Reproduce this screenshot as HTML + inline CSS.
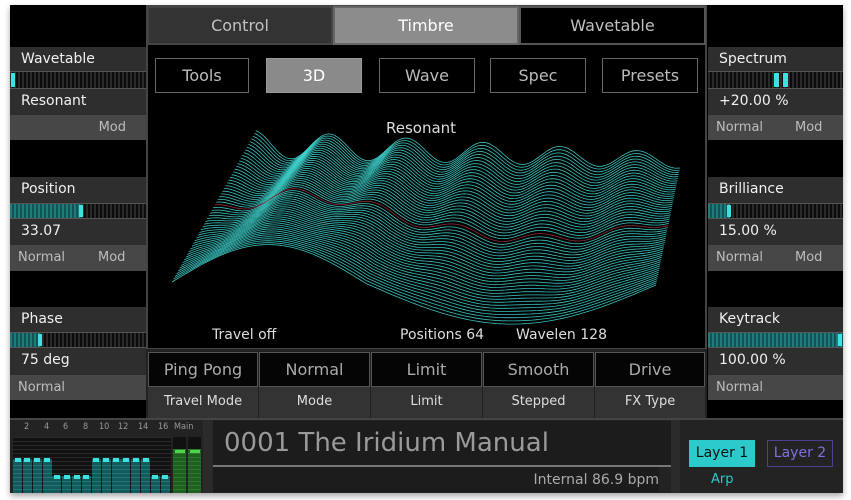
<!DOCTYPE html>
<html><head><meta charset="utf-8"><style>
*{margin:0;padding:0;box-sizing:border-box}
body{width:851px;height:500px;background:#fff;position:relative;overflow:hidden;font-family:"DejaVu Sans","Liberation Sans",sans-serif}
.a{position:absolute}
.app{left:10px;top:5px;width:833px;height:488px;background:#000;box-shadow:0 3px 6px rgba(0,0,0,.35)}
.lab{background:#2e2e2e;color:#f0f0f0;font-size:14px;padding-left:11px;line-height:25px}
.mod{background:#474747;color:#bdbdbd;font-size:13px;line-height:25px;padding-left:8px}
.bar{background:repeating-linear-gradient(90deg,#2a2a2a 0 2px,#0c0c0c 2px 4px);border-top:1px solid #555;border-bottom:1px solid #555}
.fill{background:repeating-linear-gradient(90deg,#1f7c7c 0 2px,#125454 2px 4px);height:100%;position:absolute;top:0}
.mk{position:absolute;top:1px;bottom:1px;width:4px;background:#3fe0e0}
.tab{color:#c0c0c0;font-size:16px;text-align:center;line-height:36px;border:2px solid #444}
.sub{color:#bbb;font-size:16px;text-align:center;line-height:34px;border:1px solid #666}
.btn{background:#050505;border:1px solid #555;color:#aaa;font-size:16px;text-align:center;line-height:33px}
.bl{background:#333;color:#ddd;font-size:13px;text-align:center;line-height:30px}
</style></head><body>
<div class="a app"></div>
<!-- left column -->
<div class="a lab" style="left:10px;top:47px;width:136px;height:24px">Wavetable</div>
<div class="a bar" style="left:10px;top:71px;width:136px;height:18px"><div class="mk" style="left:1px"></div></div>
<div class="a lab" style="left:10px;top:89px;width:136px;height:26px">Resonant</div>
<div class="a mod" style="left:10px;top:115px;width:136px;height:25px;text-align:right;padding-right:20px">Mod</div>
<div class="a lab" style="left:10px;top:177px;width:136px;height:26px">Position</div>
<div class="a bar" style="left:10px;top:203px;width:136px;height:16px"><div class="fill" style="left:0;width:72px"></div><div class="mk" style="left:69px"></div></div>
<div class="a lab" style="left:10px;top:219px;width:136px;height:26px">33.07</div>
<div class="a mod" style="left:10px;top:245px;width:136px;height:26px">Normal<span style="position:absolute;left:88px">Mod</span></div>
<div class="a lab" style="left:10px;top:307px;width:136px;height:25px">Phase</div>
<div class="a bar" style="left:10px;top:332px;width:136px;height:16px"><div class="fill" style="left:0;width:31px"></div><div class="mk" style="left:28px"></div></div>
<div class="a lab" style="left:10px;top:348px;width:136px;height:27px">75 deg</div>
<div class="a mod" style="left:10px;top:375px;width:136px;height:25px">Normal</div>
<!-- right column -->
<div class="a lab" style="left:708px;top:47px;width:135px;height:24px">Spectrum</div>
<div class="a bar" style="left:708px;top:71px;width:135px;height:18px"><div class="mk" style="left:66px;width:5px"></div><div class="mk" style="left:75px;width:5px"></div></div>
<div class="a lab" style="left:708px;top:89px;width:135px;height:26px">+20.00 %</div>
<div class="a mod" style="left:708px;top:115px;width:135px;height:25px">Normal<span style="position:absolute;left:87px">Mod</span></div>
<div class="a lab" style="left:708px;top:177px;width:135px;height:26px">Brilliance</div>
<div class="a bar" style="left:708px;top:203px;width:135px;height:16px"><div class="fill" style="left:0;width:22px"></div><div class="mk" style="left:19px"></div></div>
<div class="a lab" style="left:708px;top:219px;width:135px;height:26px">15.00 %</div>
<div class="a mod" style="left:708px;top:245px;width:135px;height:26px">Normal<span style="position:absolute;left:87px">Mod</span></div>
<div class="a lab" style="left:708px;top:307px;width:135px;height:25px">Keytrack</div>
<div class="a bar" style="left:708px;top:332px;width:135px;height:16px"><div class="fill" style="left:0;width:135px"></div><div class="mk" style="left:130px"></div></div>
<div class="a lab" style="left:708px;top:348px;width:135px;height:27px">100.00 %</div>
<div class="a mod" style="left:708px;top:375px;width:135px;height:25px">Normal</div>
<!-- center -->
<div class="a" style="left:146px;top:5px;width:561px;height:345px;border:2px solid #444"></div>
<div class="a tab" style="left:147px;top:6px;width:186px;height:39px;background:#333">Control</div>
<div class="a tab" style="left:333px;top:6px;width:186px;height:39px;background:#8c8c8c;color:#fff;border-color:#666">Timbre</div>
<div class="a tab" style="left:519px;top:6px;width:187px;height:39px;background:#000;border-color:#555">Wavetable</div>
<div class="a sub" style="left:155px;top:58px;width:94px;height:35px">Tools</div>
<div class="a sub" style="left:266px;top:58px;width:96px;height:35px;background:#8a8a8a;color:#fff;border-color:#999">3D</div>
<div class="a sub" style="left:379px;top:58px;width:96px;height:35px">Wave</div>
<div class="a sub" style="left:490px;top:58px;width:96px;height:35px">Spec</div>
<div class="a sub" style="left:602px;top:58px;width:96px;height:35px">Presets</div>
<svg class="a" style="left:0;top:0" width="851" height="500" id="sv"></svg>
<div class="a" style="left:386px;top:119px;color:#ddd;font-size:15px">Resonant</div>
<div class="a" style="left:212px;top:327px;color:#ddd;font-size:14px">Travel off</div>
<div class="a" style="left:400px;top:327px;color:#ddd;font-size:14px">Positions 64</div>
<div class="a" style="left:516px;top:327px;color:#ddd;font-size:14px">Wavelen 128</div>
<div class="a" style="left:146px;top:349px;width:561px;height:70px;background:#222"></div>
<div class="a btn" style="left:148px;top:352px;width:110px;height:35px">Ping Pong</div>
<div class="a btn" style="left:259px;top:352px;width:111px;height:35px">Normal</div>
<div class="a btn" style="left:371px;top:352px;width:111px;height:35px">Limit</div>
<div class="a btn" style="left:483px;top:352px;width:111px;height:35px">Smooth</div>
<div class="a btn" style="left:595px;top:352px;width:110px;height:35px">Drive</div>
<div class="a bl" style="left:148px;top:387px;width:110px;height:31px">Travel Mode</div>
<div class="a bl" style="left:259px;top:387px;width:111px;height:31px">Mode</div>
<div class="a bl" style="left:371px;top:387px;width:111px;height:31px">Limit</div>
<div class="a bl" style="left:483px;top:387px;width:111px;height:31px">Stepped</div>
<div class="a bl" style="left:595px;top:387px;width:110px;height:31px">FX Type</div>
<!-- bottom -->
<div class="a" style="left:10px;top:418px;width:833px;height:75px;background:#232323;border-top:2px solid #444"></div>
<div class="a" style="left:13px;top:422px;width:160px;color:#999;font-size:9px;font-family:'DejaVu Sans Condensed',sans-serif">
<span class="a" style="left:11px">2</span><span class="a" style="left:31px">4</span><span class="a" style="left:50px">6</span><span class="a" style="left:70px">8</span><span class="a" style="left:86px">10</span><span class="a" style="left:105px">12</span><span class="a" style="left:125px">14</span><span class="a" style="left:145px">16</span><span class="a" style="left:161px">Main</span></div>
<div class="a" style="left:13px;top:437px;width:158px;height:56px;background:repeating-linear-gradient(0deg,#111 0 3px,#2a2a2a 3px 4px)"></div>
<div id="mt"></div>
<div class="a" style="left:173px;top:437px;width:13px;height:56px;background:repeating-linear-gradient(0deg,#1f5f1f 0 3px,#2d7a2d 3px 4px)"></div>
<div class="a" style="left:188px;top:437px;width:13px;height:56px;background:repeating-linear-gradient(0deg,#1f5f1f 0 3px,#2d7a2d 3px 4px)"></div>
<div class="a" style="left:173px;top:437px;width:13px;height:12px;background:#111"></div>
<div class="a" style="left:188px;top:437px;width:13px;height:12px;background:#111"></div>
<div class="a" style="left:175px;top:450px;width:10px;height:3px;background:#4ed44e"></div>
<div class="a" style="left:190px;top:450px;width:10px;height:3px;background:#4ed44e"></div>
<div class="a" style="left:203px;top:420px;width:10px;height:73px;background:#2b2b2b"></div>
<div class="a" style="left:213px;top:421px;width:458px;height:45px;background:#1c1c1c;color:#9a9a9a;font-size:26px;line-height:45px;padding-left:11px">0001 The Iridium Manual</div>
<div class="a" style="left:213px;top:465px;width:459px;height:2px;background:#777"></div>
<div class="a" style="left:213px;top:467px;width:446px;height:25px;background:#1c1c1c;color:#aaa;font-size:14px;text-align:right;line-height:26px">Internal 86.9 bpm</div>
<div class="a" style="left:671px;top:420px;width:9px;height:73px;background:#2b2b2b"></div>
<div class="a" style="left:689px;top:440px;width:66px;height:27px;background:#2ccaca;color:#111;font-size:14px;text-align:center;line-height:27px">Layer 1</div>
<div class="a" style="left:767px;top:440px;width:66px;height:27px;border:1px solid #4a4290;color:#7d72dd;font-size:14px;text-align:center;line-height:25px">Layer 2</div>
<div class="a" style="left:711px;top:472px;color:#2ccaca;font-size:13px">Arp</div>
<script>
var lv=[459,459,459,459,476,476,476,476,459,459,459,459,459,459,476,476],h='';
for(var i=0;i<16;i++){var x=13+i*9.85;h+='<div class="a" style="left:'+x+'px;top:'+lv[i]+'px;width:9px;height:'+(493-lv[i])+'px;background:repeating-linear-gradient(0deg,#145a5a 0 3px,#1f7676 3px 4px)"></div><div class="a" style="left:'+(x+1.5)+'px;top:'+(lv[i]-1)+'px;width:6px;height:4px;background:#3fe0e0"></div>';}
document.getElementById('mt').innerHTML=h;
function front(u){return u<0.4?-38*Math.sin(Math.PI*u/0.4):40*Math.sin(Math.PI*(u-0.4)/0.6);}
var s='';
for(var j=0;j<56;j++){var v=j/55,d='';
for(var k=0;k<=140;k++){var u=k/140;
var x=172+84*v+u*(484-60*v);
var base=(282+3*u)-(130-10*u)*v;
var sag=(1-v)*front(u);
var f=5.5;
var env=v*(1-0.45*u);
var rip=-14*env*Math.cos(2*Math.PI*f*u+0.3)-8*env;
var y=base+sag+rip;
d+=(k?'L':'M')+x.toFixed(1)+' '+y.toFixed(1);}
s+='<path d="'+d+'" fill="none" stroke="'+(j==28?'#a03040':'#3fd6d0')+'" stroke-width="0.8" opacity="0.9"/>';}
document.getElementById('sv').innerHTML=s;
</script>
</body></html>
